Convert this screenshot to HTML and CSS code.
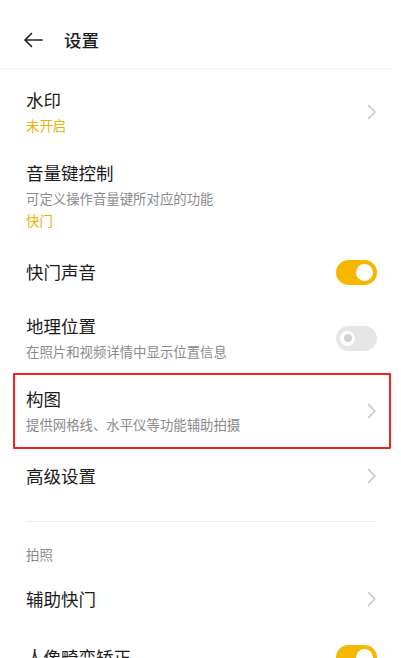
FILE: index.html
```html
<!DOCTYPE html>
<html lang="zh-CN">
<head>
<meta charset="utf-8">
<title>设置</title>
<link rel="stylesheet" href="styles.css">
</head>
<body>
<div class="page">
  <header class="topbar">
    <svg class="back" width="20" height="16" viewBox="0 0 20 16" aria-hidden="true">
      <path d="M19 8H2M8.5 1.5L2 8l6.5 6.5" fill="none" stroke="#222" stroke-width="1.7" stroke-linecap="round" stroke-linejoin="round"/>
    </svg>
    <h1 class="title">设置</h1>
  </header>
  <div class="list">
    <div class="row two">
      <div class="text">
        <div class="name">水印</div>
        <div class="sub accent">未开启</div>
      </div>
      <svg class="chev" width="10" height="16" viewBox="0 0 10 16" aria-hidden="true"><path d="M1.5 1.5L8 8l-6.5 6.5" fill="none" stroke="#c4c4c4" stroke-width="1.5" stroke-linecap="round" stroke-linejoin="round"/></svg>
    </div>
    <div class="row two">
      <div class="text">
        <div class="name">音量键控制</div>
        <div class="sub">可定义操作音量键所对应的功能</div>
        <div class="sub accent tight">快门</div>
      </div>
    </div>
    <div class="row one">
      <div class="text"><div class="name">快门声音</div></div>
      <span class="switch on"><span class="knob"></span></span>
    </div>
    <div class="row two">
      <div class="text">
        <div class="name">地理位置</div>
        <div class="sub">在照片和视频详情中显示位置信息</div>
      </div>
      <span class="switch off"><span class="knob"></span></span>
    </div>
    <div class="row two marked">
      <div class="text">
        <div class="name">构图</div>
        <div class="sub">提供网格线、水平仪等功能辅助拍摄</div>
      </div>
      <svg class="chev" width="10" height="16" viewBox="0 0 10 16" aria-hidden="true"><path d="M1.5 1.5L8 8l-6.5 6.5" fill="none" stroke="#c4c4c4" stroke-width="1.5" stroke-linecap="round" stroke-linejoin="round"/></svg>
    </div>
    <div class="row one">
      <div class="text"><div class="name">高级设置</div></div>
      <svg class="chev" width="10" height="16" viewBox="0 0 10 16" aria-hidden="true"><path d="M1.5 1.5L8 8l-6.5 6.5" fill="none" stroke="#c4c4c4" stroke-width="1.5" stroke-linecap="round" stroke-linejoin="round"/></svg>
    </div>
    <div class="divider"></div>
    <div class="section">拍照</div>
    <div class="row one">
      <div class="text"><div class="name">辅助快门</div></div>
      <svg class="chev" width="10" height="16" viewBox="0 0 10 16" aria-hidden="true"><path d="M1.5 1.5L8 8l-6.5 6.5" fill="none" stroke="#c4c4c4" stroke-width="1.5" stroke-linecap="round" stroke-linejoin="round"/></svg>
    </div>
    <div class="row one">
      <div class="text"><div class="name">人像畸变矫正</div></div>
      <span class="switch on"><span class="knob"></span></span>
    </div>
  </div>
</div>
</body>
</html>
```
FILE: styles.css
```css
* { box-sizing: border-box; }
html, body { margin: 0; padding: 0; background: #fff; }
body {
  font-family: "Noto Sans CJK SC", "Noto Sans", sans-serif;
  color: #1c1c1c;
  overflow: hidden;
  height: 658px;
}
.page { width: 401px; }
.topbar {
  height: 69px;
  display: flex;
  align-items: center;
  padding: 12px 0 0 23px;
  margin: 0 10px 0 0;
  border-bottom: 1px solid #efefef;
}
.back { display: block; }
.title {
  margin: 0 0 0 21px;
  font-size: 17.5px;
  font-weight: 500;
  line-height: 24px;
  color: #1c1c1c;
}
.list { padding-top: 6px; }
.row {
  position: relative;
  display: flex;
  align-items: center;
  justify-content: space-between;
  padding: 0 24px 0 26px;
}
.row.two { padding-top: 13px; padding-bottom: 12px; }
.row.one { height: 58px; }
.name {
  font-size: 17.5px;
  line-height: 24px;
  color: #1c1c1c;
}
.sub {
  margin-top: 2px;
  font-size: 13.4px;
  line-height: 22px;
  color: #8a8a8a;
}
.sub.tight { margin-top: 0; }
.accent { color: #e6b20c; }
.chev {
  display: block;
  flex: none;
  margin-right: 0;
}
.switch {
  flex: none;
  width: 41px;
  height: 25px;
  border-radius: 13px;
  display: flex;
  align-items: center;
  padding: 0 4px;
}
.switch.on { background: #f6b700; justify-content: flex-end; }
.switch.on .knob {
  width: 17px; height: 17px; border-radius: 50%; background: #fff;
}
.switch.off { background: #e6e6e6; justify-content: flex-start; }
.switch.off .knob {
  width: 15px; height: 15px; border-radius: 50%; background: #fff;
  display: flex; align-items: center; justify-content: center;
}
.switch.off .knob::after {
  content: ""; width: 8px; height: 8px; border-radius: 50%; background: #d2d2d2;
}
.marked::after {
  content: "";
  position: absolute;
  top: -1px; bottom: -2px; left: 13px; right: 10px;
  border: 2px solid #f4201d;
  border-radius: 1px;
  pointer-events: none;
}
.divider {
  height: 1px;
  background: #ececec;
  margin: 16px 24px 0 26px;
}
.section {
  padding: 22px 26px 6px;
  font-size: 13.4px;
  line-height: 20px;
  color: #8a8a8a;
}
```
